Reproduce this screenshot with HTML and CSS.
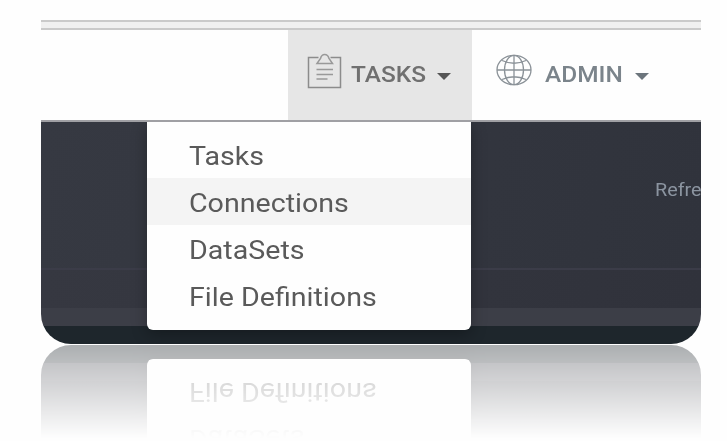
FILE: index.html
```
<!DOCTYPE html>
<html lang="en">
<head>
    <meta charset="UTF-8">
    <meta name="viewport" content="width=device-width, initial-scale=1.0">
    <title>Tasks</title>
    <link rel="stylesheet" href="styles.css">
</head>
<body>

    <div class="card">
        <div class="top-space"></div>
        <div class="toolbar-strip"></div>

        <!-- Navigation -->
        <nav class="navbar">
            <div class="nav-item active">
                <svg class="clip-icon" width="36" height="38" viewBox="0 0 36 38" fill="none" stroke="#8c8c8c" stroke-width="1.5">
                    <path d="M11.5 4.5H1.5V34.500H33.500V4.500H23.500"/>
                    <path d="M10 10.500L13.500 5.500Q14.500 1.500 17.700 1.500Q21 1.500 22 5.500L25.500 10.500Z" stroke="#999"/>
                    <path d="M9.500 16.500H26M9.500 21.500H26M9.500 26H20.500" stroke="#999"/>
                </svg>
                <span class="nav-text">TASKS</span>
                <span class="caret"></span>

                <ul class="menu">
                    <li><span>Tasks</span></li>
                    <li class="selected"><span>Connections</span></li>
                    <li><span>DataSets</span></li>
                    <li><span>File Definitions</span></li>
                </ul>
            </div>
            <div class="nav-item admin">
                <svg class="globe-icon" width="36" height="32" viewBox="0 0 36 32" fill="none" stroke="#8b9298" stroke-width="1.3">
                    <ellipse cx="18" cy="16" rx="17" ry="14.700"/>
                    <ellipse cx="18" cy="16" rx="9.500" ry="14.700"/>
                    <path d="M18 1.300V30.700M1 16H35M6 6.500Q18 12 30 6.500M6 25.500Q18 20 30 25.500"/>
                </svg>
                <span class="nav-text">ADMIN</span>
                <span class="caret"></span>
            </div>
        </nav>

        <!-- Page content -->
        <div class="content"><span class="refresh">Refre</span></div>
        <div class="row"></div>
        <div class="row-light"></div>
        <div class="footer"></div>
    </div>

</body>
</html>
```

FILE: styles.css
```
* {
    margin: 0;
    padding: 0;
    box-sizing: border-box;
}

body {
    font-family: Roboto, sans-serif;
    background-color: #fefefe;
    padding-left: 41px;
    height: 441px;
    overflow: hidden;
}

.card {
    width: 660px;
    height: 344px;
    border-radius: 20px 20px 30px 30px;
    overflow: hidden;
    background-color: #fefefe;
    /* Fading mirror image under the card */
    -webkit-box-reflect: below 1px linear-gradient(to bottom, transparent 250px, rgba(0, 0, 0, 0.12) 282px, rgba(0, 0, 0, 0.37) 344px);
}

.top-space {
    height: 20px;
}

.toolbar-strip {
    height: 10px;
    background-color: #f0f0f0;
    border-top: 2px solid #cacaca;
    border-bottom: 2px solid #cacaca;
}

.navbar {
    display: flex;
    height: 92px;
    padding-left: 247px;
    border-bottom: 2px solid #a0a0a4;
}

.nav-item {
    position: relative;
    display: flex;
    width: 184px;
    padding-left: 19px;
    color: #707070;
}

.nav-item.active {
    background-color: #e6e6e6;
}

.nav-item.admin {
    padding-left: 24px;
    color: #7b848b;
}

.clip-icon {
    margin-top: 23px;
}

.globe-icon {
    margin-top: 24px;
}

.nav-text {
    width: 84px;
    margin-left: 8px;
    margin-top: 32px;
    font-size: 22px;
    line-height: 26px;
    font-weight: 500;
    transform: scaleX(1.11);
    transform-origin: left;
}

.admin .nav-text {
    width: 91px;
    margin-left: 13px;
}

.caret {
    width: 14px;
    height: 7px;
    margin-top: 43px;
    margin-left: 2px;
    background-color: #555;
    clip-path: polygon(0 0, 100% 0, 50% 100%);
}

.admin .caret {
    margin-left: -1px;
    background-color: #6c757c;
}

/* Dropdown under the Tasks tab */
.menu {
    position: absolute;
    top: 92px;
    left: -141px;
    width: 324px;
    height: 208px;
    padding-top: 9px;
    list-style: none;
    background-color: #fefefe;
    border-radius: 0 0 6px 6px;
    box-shadow: 0 4px 16px rgba(0, 0, 0, 0.3);
    clip-path: inset(0 -30px -30px -30px);
}

.menu li {
    height: 47px;
    padding-left: 42px;
    font-size: 26px;
    line-height: 50px;
    color: #5a5a5a;
}

.menu li.selected {
    background-color: #f4f4f4;
}

.menu span {
    display: inline-block;
    transform: scaleX(1.1);
    transform-origin: left;
}

.content {
    height: 146px;
    padding-top: 56px;
    padding-left: 614px;
    background: linear-gradient(100deg, #363942, #30333c);
}

.refresh {
    display: inline-block;
    font-size: 18px;
    line-height: 24px;
    color: #8b94a0;
    transform: scaleX(1.1);
    transform-origin: left;
}

.row {
    height: 40px;
    background: linear-gradient(100deg, #363841, #30323b);
    border-top: 2px solid #3b3c48;
}

.row-light {
    height: 18px;
    background-color: #3c3e47;
}

.footer {
    height: 18px;
    background-color: #1e262c;
}
```
